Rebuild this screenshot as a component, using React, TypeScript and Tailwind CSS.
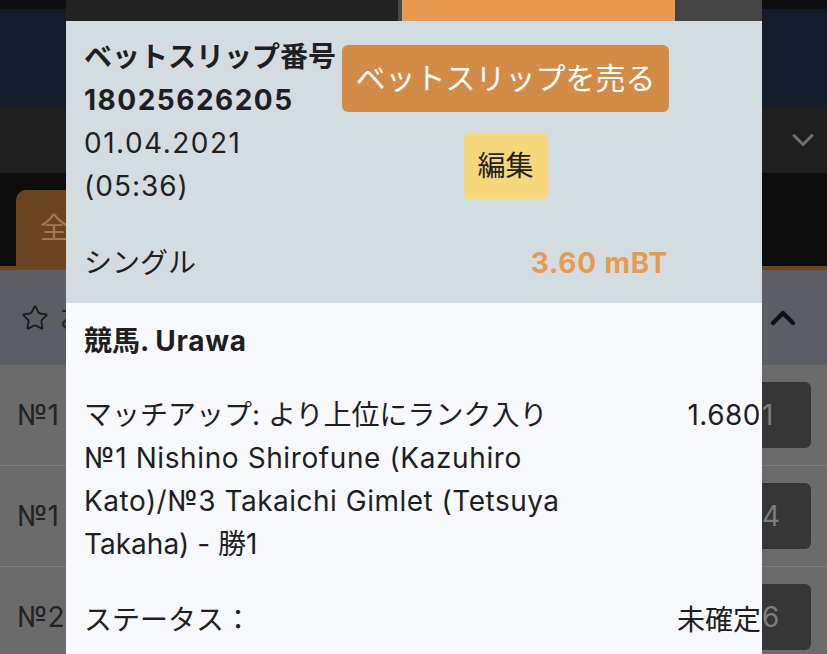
import { Star, ChevronUp, ChevronDown } from 'lucide-react';

const rows = [
  { label: '№1', odd: '1' },
  { label: '№1', odd: '4' },
  { label: '№2', odd: '6' },
];

function Background() {
  return (
    <div className="flex h-full flex-col">
      <div className="h-[9px] shrink-0 bg-[#0e0e0e]" />
      <div className="h-[98px] shrink-0 bg-[#131c2a]" />
      <div className="flex h-[66px] shrink-0 items-center justify-end bg-[#1f1f1f] pr-[6px]">
        <ChevronDown size={36} strokeWidth={2} className="text-[#6f6f6f]" />
      </div>
      <div className="flex h-[93px] shrink-0 items-end bg-[#0d0d0d] pl-[16px]">
        <div className="flex h-[76px] w-[200px] items-center rounded-tl-[10px] bg-[#6a4420] pl-[24px] text-[28px] text-[#9b7a58]">
          全て
        </div>
      </div>
      <div className="h-[4px] shrink-0 bg-[#6e4520]" />
      <div className="flex h-[95px] shrink-0 items-center justify-between bg-[#5b5e62] pl-[21px] pr-[24px]">
        <div className="flex items-center gap-[10px] text-[28px] text-[#222]">
          <Star size={28} strokeWidth={1.6} className="text-[#1c1c1c]" />
          {/* only a sliver shows next to the slip */}
          <span className="w-[10px] overflow-hidden whitespace-nowrap">お</span>
        </div>
        <ChevronUp size={40} strokeWidth={2.6} className="text-[#111]" />
      </div>
      {rows.map((r, i) => (
        <div
          key={i}
          className="flex h-[101px] shrink-0 items-center justify-between border-b border-[#7b7b7b] bg-[#6b6b6b] pl-[17px] pr-[16px]"
        >
          <span className="text-[28px] text-[#232323]">{r.label}</span>
          <div className="flex h-[66px] w-[91px] items-center rounded-[6px] bg-[#363636] pl-[42px] text-[28px] text-[#7d7d7d]">
            {r.odd}
          </div>
        </div>
      ))}
    </div>
  );
}

function BetSlip() {
  return (
    <div className="flex h-full flex-col overflow-hidden text-[28px] leading-[43px] text-[#1f1f1f]">
      {/* tabs */}
      <div className="flex h-[21px] shrink-0">
        <div className="w-[332px] bg-[#222222]" />
        <div className="w-[4px] bg-[#4a4a4a]" />
        <div className="w-[273px] bg-[#e89b50]" />
        <div className="flex-1 bg-[#444444]" />
      </div>

      {/* header */}
      <div className="shrink-0 bg-[#d3dce1] pb-[18px] pl-[18px] pr-[94px] pt-[15px]">
        <div className="flex">
          <div className="w-[258px] shrink-0">
            <div className="font-bold">ベットスリップ番号</div>
            <div className="font-bold tracking-[1.5px]">18025626205</div>
            <div className="tracking-[1.5px]">01.04.2021</div>
            <div className="tracking-[1px]">(05:36)</div>
          </div>
          <div className="flex flex-col items-center gap-[21px] pt-[9px]">
            <button className="h-[67px] w-[327px] rounded-[6px] bg-[#d38b48] text-[30px] text-white">
              ベットスリップを売る
            </button>
            <button className="h-[66px] w-[84px] rounded-[6px] bg-[#f6d77b] text-[#222]">編集</button>
          </div>
        </div>
        <div className="mt-[34px] flex justify-between">
          <span>シングル</span>
          <span className="font-bold tracking-[0.8px] text-[#e89a4e]">3.60 mBT</span>
        </div>
      </div>

      {/* event */}
      <div className="flex-1 bg-[#f8f9fc] pl-[18px] pr-[1px] pt-[17px]">
        <div className="font-bold">
          競馬. <span className="tracking-[0.8px]">Urawa</span>
        </div>
        <div className="mt-[31px] flex justify-between">
          <div>
            <div>マッチアップ: より上位にランク入り</div>
            <div className="tracking-[0.6px]">№1 Nishino Shirofune (Kazuhiro</div>
            <div className="tracking-[0.5px]">Kato)/№3 Takaichi Gimlet (Tetsuya</div>
            <div>Takaha) - 勝1</div>
          </div>
          <div className="tracking-[0.5px]">1.680</div>
        </div>
        <div className="mt-[33px] flex justify-between">
          <span>ステータス：</span>
          <span>未確定</span>
        </div>
      </div>
    </div>
  );
}

export default function App() {
  return (
    <div className="relative h-[654px] w-[827px] overflow-hidden font-['Inter','Noto_Sans_CJK_JP',sans-serif]">
      <Background />
      <div className="absolute left-[66px] top-0 h-full w-[696px]">
        <BetSlip />
      </div>
    </div>
  );
}
